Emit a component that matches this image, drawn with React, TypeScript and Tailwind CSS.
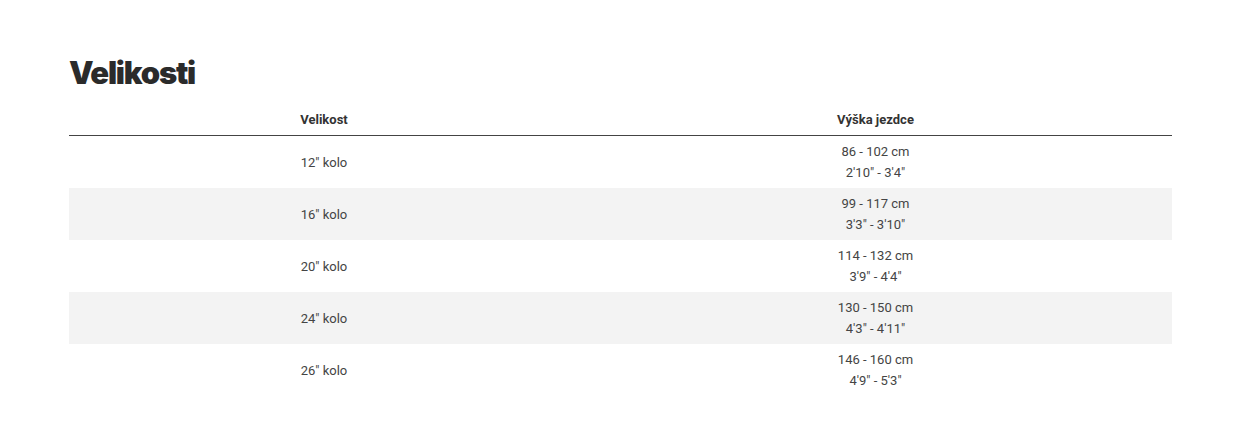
import React from "react";

const rows = [
  { size: '12" kolo', cm: "86 - 102 cm", ft: `2'10" - 3'4"` },
  { size: '16" kolo', cm: "99 - 117 cm", ft: `3'3" - 3'10"` },
  { size: '20" kolo', cm: "114 - 132 cm", ft: `3'9" - 4'4"` },
  { size: '24" kolo', cm: "130 - 150 cm", ft: `4'3" - 4'11"` },
  { size: '26" kolo', cm: "146 - 160 cm", ft: `4'9" - 5'3"` },
];

export default function App() {
  return (
    <div className="bg-white w-[1234px] h-[428px] pl-[69px] pt-[53px] font-['Roboto',sans-serif] text-[#444]">
      <h2 className="font-['Inter',sans-serif] font-black text-[31px] leading-[40px] tracking-[-1.2px] text-[#2b2b2b]">
        Velikosti
      </h2>
      <div className="w-[1103px] mt-[11px]">
        <div className="grid grid-cols-[510px_1fr] border-b-[1.5px] border-[#444] h-[32px] items-center text-[13px] font-bold text-[#333]">
          <div className="text-center">Velikost</div>
          <div className="text-center">Výška jezdce</div>
        </div>
        {rows.map((r, i) => (
          <div
            key={i}
            className={`grid grid-cols-[510px_1fr] h-[52px] items-center text-[13px] leading-[21px] ${
              i % 2 === 1 ? "bg-[#f3f3f3]" : ""
            }`}
          >
            <div className="text-center">{r.size}</div>
            <div className="text-center">
              <div>{r.cm}</div>
              <div>{r.ft}</div>
            </div>
          </div>
        ))}
      </div>
    </div>
  );
}
